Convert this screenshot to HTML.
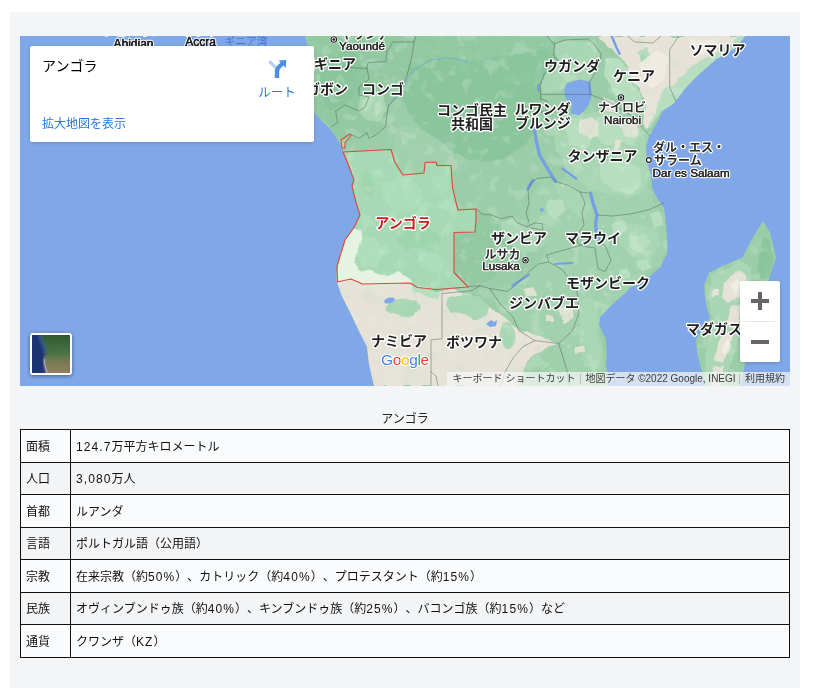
<!DOCTYPE html>
<html lang="ja">
<head>
<meta charset="utf-8">
<title>アンゴラ</title>
<style>
html,body{margin:0;padding:0;background:#fff;}
body{width:813px;height:696px;position:relative;overflow:hidden;font-family:"Liberation Sans","Noto Sans CJK JP",sans-serif;}
#wrap{position:absolute;left:10px;top:12px;width:790px;height:676px;background:#f3f5f7;}
#map{position:absolute;left:20px;top:36px;width:770px;height:350px;overflow:hidden;background:#80a8e8;}
#map svg{position:absolute;left:0;top:0;display:block;}
#card{position:absolute;left:10px;top:10px;width:284px;height:96px;background:#fff;border-radius:2px;box-shadow:0 1px 4px -1px rgba(0,0,0,.3);}
#card .ttl{position:absolute;left:12px;top:11px;font-size:14px;line-height:18px;color:#000;}
#card .lnk{position:absolute;left:12px;top:69.5px;font-size:12px;line-height:16px;color:#2a77e0;}
#card .rt{position:absolute;left:216px;top:38.5px;width:62px;text-align:center;font-size:12.5px;line-height:16px;color:#2a77e0;}
#card svg.ic{position:absolute;left:238px;top:14px;}
#sat{position:absolute;left:10px;top:297px;width:38px;height:38px;border:2px solid #fff;border-radius:3px;box-shadow:0 1px 4px rgba(0,0,0,.45);overflow:hidden;background:#3d6b3a;}
#zoom{position:absolute;left:720px;top:245px;width:40px;height:81px;background:#fff;border-radius:2px;box-shadow:0 1px 4px -1px rgba(0,0,0,.3);}
#zoom i{position:absolute;background:#666;}
#attr{position:absolute;right:0;bottom:0;height:14px;font-size:10px;line-height:14px;color:#3c3c3c;white-space:nowrap;}
#attr span{position:absolute;top:0;height:14px;background:rgba(245,245,245,.72);}
#mapsvg,#card div,#attr,#cap,table{will-change:transform;}
#cap{position:absolute;left:20px;top:410.5px;width:770px;text-align:center;font-size:12px;line-height:17px;color:#222;}
table{position:absolute;left:20px;top:429px;width:770px;border-collapse:collapse;font-size:12px;color:#111;table-layout:fixed;text-spacing-trim:space-all;}
td{border:1px solid #111;padding:0 5px 2px;vertical-align:middle;background:#fafbfc;}
tr:nth-child(even) td{background:#f3f4f6;}
td:first-child{width:39px;}
.n{letter-spacing:1.1px;}
</style>
</head>
<body>
<div id="wrap"></div>
<div id="map">
<svg id="mapsvg" width="770" height="350" viewBox="20 36 770 350">
<defs>
<style>
.c{font-family:"Liberation Sans","Noto Sans CJK JP",sans-serif;font-weight:700;font-size:14px;fill:#1f1f1f;stroke:#fff;stroke-width:2.6px;stroke-linejoin:round;paint-order:stroke fill;text-anchor:middle;}
.t{font-family:"Liberation Sans","Noto Sans CJK JP",sans-serif;font-weight:500;font-size:12px;fill:#2b2b2b;stroke:#fff;stroke-width:2.4px;stroke-linejoin:round;paint-order:stroke fill;text-anchor:middle;}
.tl{font-family:"Liberation Sans",sans-serif;font-weight:400;font-size:11.7px;fill:#2a2a2a;stroke:#fff;stroke-width:2.4px;stroke-linejoin:round;paint-order:stroke fill;text-anchor:middle;}
.b{fill:none;stroke:#4f5a53;stroke-width:.7;stroke-opacity:.65;stroke-linejoin:round;stroke-linecap:round;}
.w{fill:#80a8e8;}
.r{fill:none;stroke:#749fe6;stroke-linecap:round;stroke-linejoin:round;}
.lg{fill:#b7debf;}
.mg{fill:#a9d6b3;}
.dg{fill:#8ac59b;}
.dg2{fill:#92c9a1;}
.bg{fill:#e6e2d7;}
.bg2{fill:#dfe3cf;}
</style>
<clipPath id="land"><use href="#africa"/><use href="#mada"/></clipPath>
<filter id="bl" x="0" y="0" width="100%" height="100%" filterUnits="objectBoundingBox"><feTurbulence type="fractalNoise" baseFrequency="0.06" numOctaves="2" seed="7" result="n"/><feDisplacementMap in="SourceGraphic" in2="n" scale="7" xChannelSelector="R" yChannelSelector="G" result="d"/><feGaussianBlur in="d" stdDeviation="0.5"/></filter>
<filter id="tx" x="0" y="0" width="100%" height="100%"><feTurbulence type="fractalNoise" baseFrequency="0.07" numOctaves="3" seed="11" result="n"/><feColorMatrix in="n" type="matrix" values="0 0 0 0 0.78  0 0 0 0 0.9  0 0 0 0 0.8  9 0 0 0 -5.2"/></filter>
<filter id="tx2" x="0" y="0" width="100%" height="100%"><feTurbulence type="fractalNoise" baseFrequency="0.055" numOctaves="3" seed="23" result="n"/><feColorMatrix in="n" type="matrix" values="0 0 0 0 0.47  0 0 0 0 0.72  0 0 0 0 0.55  0 9 0 0 -5.4"/></filter>
</defs>
<rect x="20" y="36" width="770" height="350" fill="#80a8e8"/>
<!-- mainland -->
<path id="africa" fill="#9bcda8" d="M305 36 L309 48 L312 62 L309 78 L308 92 L314 112 L322 121 L331 130 L338 140 L343 150 L347.5 162.5 L354 180 L352 186 L356 202.5 L360 215 L354 227.5 L345 240 L340 254 L337 266 L336.7 281 L341.6 295.5 L349.5 311 L359 331 L367 346.7 L369 364 L374 386 L608 386 L607.8 372 L605.8 366 L606.8 354.4 L605.8 338.7 L599 325 L600 317 L611.7 305 L625 293 L630 287.5 L642.5 282.5 L660 267.5 L667.5 252.5 L667 238 L666 225 L664 208 L660 203 L652.5 190 L651 175 L646.5 160 L646 146 L649 136.4 L657 122.6 L662.8 110.8 L674.6 103 L684.5 89 L700 73.4 L716 59.6 L735.7 47.8 L745.5 36 Z"/>
<path id="mada" fill="#9bcda8" d="M763 221 L770 232.5 L776 257.5 L770 275 L764 300 L756 330 L745 365 L740 386 L704 386 L702.5 374 L697.5 355 L696 340 L703 328 L710 317.5 L706 305 L704 285 L709 272.5 L722.5 266 L742.5 257.5 L750 242.5 L759 227.5 Z"/>
<g clip-path="url(#land)"><g filter="url(#bl)">
<!-- ===== darker greens ===== -->
<path class="dg2" d="M300 36 L420 36 L412 56 L406 78 L400 93 L389 105 L387 126 L377 134 L360 138 L345 142 L331 130 L314 112 L300 90Z"/>
<path class="dg" d="M416 36 L548 36 L555 44 L554 56 L557 60 L545 73 L540 85 L541 100 L538 120 L534 134 L524 146 L508 156 L490 162 L470 160 L452 152 L438 140 L426 132 L414 120 L404 104 L402 88 L408 72 L412 55Z"/>
<path class="dg2" d="M416 36 L548 36 L552 46 L520 54 L496 57 L468 60 L450 57 L432 58 L414 68 L410 60Z"/>
<path class="dg" d="M320 60 L350 50 L370 70 L360 90 L345 104 L330 110 L318 96Z"/>
<path class="dg2" d="M476 232 L500 236 L514 246 L510 262 L496 276 L478 284 L468 287 L454 272 L454 233Z"/>
<path class="dg2" d="M476 210 L492 216 L500 226 L496 236 L476 232Z"/>
<!-- ===== medium / light greens ===== -->
<path d="M556 182 L600 150 L650 190 L666 225 L667 252 L642 282 L610 304 L600 330 L606 386 L570 386 L560 345 L535 335 L500 312 L490 290 L515 285 L540 262 L548 240 L530 228 L530 200 L540 180Z" fill="#a1d1ad"/>
<path class="mg" d="M361 95 L372 91 L384 96 L386 110 L380 122 L366 120 L358 110Z"/>
<path class="lg" d="M364 100 L370 96 L372 104 L368 112 L363 108Z M374 104 L380 100 L382 110 L376 116Z"/>
<path d="M392 128 L410 124 L430 136 L448 150 L470 162 L452 166 L436 162 L425 163 L424 173 L403 175 L395 162Z" fill="#a1d0ac"/>
<!-- angola interior texture -->
<path d="M382 182 L400 178 L418 184 L424 198 L416 210 L398 212 L384 204Z" fill="#a2d2ae"/>
<path d="M360 236 L376 238 L384 252 L378 266 L362 268 L356 254Z" fill="#a6d5b1"/>
<path d="M400 230 L412 226 L420 232 L430 228 L440 236 L436 248 L426 252 L414 246 L406 250 L398 242Z" fill="#8fc79e"/>
<path d="M360 172 L368 170 L374 182 L372 196 L364 192Z" fill="#91c8a0"/>
<path d="M420 254 L436 254 L446 262 L440 274 L426 272 L418 262Z" fill="#a3d3af"/>
<path d="M432 176 L446 172 L450 186 L444 198 L434 192Z" fill="#a1d1ad"/>
<!-- uganda lighter -->
<path class="mg" d="M556 44 L590 40 L600 54 L596 72 L588 82 L570 82 L562 90 L542 94 L541 84 L546 73 L558 60 L554 55Z"/>
<!-- tanzania -->
<path class="mg" d="M560 116 L590 112 L620 112 L644 128 L646 160 L650 180 L640 196 L610 196 L585 186 L566 172 L556 150 L552 130Z"/>
<path class="lg" d="M596 118 L612 112 L628 118 L640 130 L636 146 L622 142 L606 146 L594 136Z"/>
<path class="lg" d="M566 128 L580 124 L590 140 L584 150 L570 146Z"/>
<path class="lg" d="M600 166 L620 160 L638 166 L644 184 L630 196 L612 192 L602 182Z"/>
<path class="mg" d="M556 182 L570 186 L582 194 L590 206 L584 220 L572 214 L560 200Z"/>
<!-- mozambique lighter -->
<path class="mg" d="M620 226 L640 222 L656 230 L660 248 L648 262 L630 258 L620 244Z"/>
<path class="lg" d="M630 236 L644 232 L650 244 L640 252 L630 248Z"/>
<path class="mg" d="M578 300 L592 296 L600 306 L596 330 L602 350 L596 372 L584 366 L580 340Z"/>
<path class="lg" d="M612 224 L622 220 L628 230 L620 238 L612 234Z M636 262 L648 258 L652 268 L642 274Z M618 270 L628 268 L630 278 L620 282Z M650 214 L660 212 L662 224 L654 228Z"/>
<!-- zambia -->
<path class="mg" d="M500 222 L516 218 L530 228 L544 226 L548 240 L536 252 L518 250 L506 240Z"/>
<path class="lg" d="M548 200 L560 198 L566 210 L556 218 L546 212Z"/>
<path class="lg" d="M606 60 L618 58 L628 70 L632 84 L640 92 L642 108 L634 112 L622 104 L612 92 L604 76Z"/>
<path class="lg" d="M746 36 L736 48 L716 60 L700 74 L684 90 L674 104 L662 111 L650 128 L640 110 L660 84 L690 60 L720 44 L735 36Z"/>
<!-- ===== beige ===== -->
<path class="bg" d="M330 280 L351 277 L362 283 L410 283 L418 287.5 L438 290.6 L455 290 L470 295 L482 301 L490 307 L499 313 L509 321 L517 329 L535 335 L549 339 L557 345 L545 348.5 L535 354 L527 362 L519 386 L370 386 L338 300Z"/>
<path d="M353 228 L362 232 L357 250 L354 262 L360 272 L372 269 L386 276 L398 272 L410 279 L413 283 L362.5 284 L351 279 L337 282 L337 266 L345 240Z" fill="#f2efe6"/>
<path class="bg" d="M598 36 L739.6 36 L727.8 47.8 L708 55.7 L692.4 65.5 L676.6 81.3 L664.8 89 L658.9 101 L655 114.7 L647 128.5 L643 122.6 L645 105 L639 87 L631.3 81.3 L627.4 67.5 L619.5 55.7Z"/>
<path d="M640 60 L660 50 L668 60 L664 80 L652 90 L644 78Z M690 40 L720 38 L712 50 L694 56Z" fill="#efebe2"/>
<path class="bg" d="M580 120 L590 116 L600 122 L598 136 L588 140 L580 132Z M613 140 L619 140 L619 151 L613 150Z M620 126 L636 124 L638 136 L624 138Z M602 98 L614 100 L618 112 L606 112Z" opacity=".9"/>
<path class="bg" d="M525 288 L534 286 L536 294 L527 296Z M558 308 L572 306 L574 318 L562 322Z M546 316 L552 315 L552 321 L546 321Z M576 346 L584 346 L584 352 L577 353Z M553 356 L559 356 L559 362 L553 362Z" opacity=".9"/>
<!-- green in namibia/botswana/s.africa (over beige) -->
<path class="mg" d="M388 305 L396 300 L404 298 L416 300 L420 308 L414 315 L402 316 L392 314 L386 310Z"/>
<path class="lg" d="M413 286 L426 288 L440 292 L438 298 L424 297 L414 293Z"/>
<path class="mg" d="M448 297 L462 294 L478 297 L490 306 L488 316 L474 319 L462 313 L452 314 L446 305Z"/>
<path class="mg" d="M503 322 L512 324 L516 336 L510 350 L503 346 L500 332Z"/>
<path d="M535 354 L545 348.5 L557 345 L566 362 L569 386 L519 386 L527 362Z" fill="#9fd0aa"/>
<path class="mg" d="M636 50 L646 46 L650 54 L642 60 L640 56Z"/>
<!-- madagascar -->
<path class="mg" d="M712 274 L740 262 L752 268 L752 294 L744 318 L736 346 L726 386 L706 386 L704 360 L710 336 L712 318 L708 296Z"/>
<path class="bg" d="M724 282 L736 273 L747 277 L749 290 L744 300 L736 296 L730 304 L722 298Z M731 306 L741 304 L740 320 L734 330 L726 326 L728 314Z M724 332 L734 334 L730 350 L724 362 L716 360 L718 344Z M714 366 L724 366 L720 386 L710 386Z M711 290 L718 288 L718 296 L712 297Z"/>
<path d="M730 284 L738 280 L742 288 L736 292Z M728 338 L732 340 L726 354 L722 352Z" fill="#f1eee6"/>
<path class="dg" d="M762 236 L770 240 L774 258 L768 276 L760 284 L758 266 L760 250Z"/>

</g><rect x="20" y="36" width="770" height="350" filter="url(#tx)" opacity=".2"/><rect x="20" y="36" width="770" height="350" filter="url(#tx2)" opacity=".12"/></g>
<path class="w" d="M564 90 L567 83 L580 79.5 L591 82 L592 94 L589 104 L585 110 L579 115.5 L571 113 L572 105 L566 99Z"/>
<path class="r" d="M534.5 128 L536 140 L538 148 L539.5 155 L546 166 L551.7 175.5 L555.6 181.4" stroke-width="3.2"/>
<path class="r" d="M590.5 193 L593 203 L597 215 L595.5 224.7 L596.5 232.6 L600 244" stroke-width="3.3"/>
<path class="r" d="M562.5 168.6 L576 178.5" stroke-width="2.4"/>
<path class="r" d="M527.5 189 L533 180.5" stroke-width="3.2"/>
<path class="r" d="M512.3 285.5 L521 280 L529 274.7" stroke-width="2.4"/>
<path class="r" d="M554.6 264 L572.4 263" stroke-width="1.8"/>
<path class="r" d="M611.7 36 L616.6 47.8 L619.6 53.7" stroke-width="2.4"/>
<path class="r" d="M538 85 L538.5 91" stroke-width="2.2"/>
<circle cx="541.8" cy="210" r="2" class="w"/>
<ellipse cx="389.5" cy="300.5" rx="5.5" ry="2.8" class="w" transform="rotate(-15 389.5 300.5)"/>
<path class="w" d="M486 324 L491 320 L494 322 L497 320 L496 326 L490 327Z"/>
<path class="r" d="M467.5 61.6 L450 58 L432 59.6 L414 69.5 L406.5 81 L392.7 101 L387.8 107" stroke-width=".9" stroke-opacity=".7"/>

<g class="b">
<path d="M316 65.5 L367 68.5 L369 79 L359 87 L359 95 L369 97 L365 107 L359 111 L345.4 105 L335.6 111 L337.5 122.6 L331.6 126.5"/>
<path d="M367 68.5 L368 62.6 L385.8 61.6 L386.8 51.7 L390.7 45.8 L392.7 42 L414 42 L416 36"/>
<path d="M414 42 L412 55.7 L406.5 77 L400.5 93 L388.7 105 L386.8 114.7 L385.8 126.5 L377 134.4 L369 138.4 L367 132.5 L359 138.4 L351 134.4"/>
<path d="M546.8 36 L554.6 43.9 L553.7 55.7 L557.6 59.6 L544.8 73.4 L539.9 85.2 L540.9 99"/>
<path d="M554.6 43.9 L564.5 40 L588 39 L593 43 L601 53.7 L600 61.6 L596 71.4 L589 83.2 L590 94.5"/>
<path d="M541 94.3 L590 94.5 L607.8 101 L630 114.7 L650 136"/>
<path d="M541 99 L547 101 L548 110 L541 112 L546 116 L549 124 L542 128 L535 129"/>
<path d="M678.6 36 L669.7 49.8 L669.7 87 L675.6 101"/>
<path d="M627.4 36 L635 42 L653 43 L661 36"/>
<path d="M477 209 L481.8 214 L491.6 215 L501.5 218.8 L512 216 L517 222.8 L527 226.7 L535 222.8 L542 223.7 L543 230 L531 228"/>
<path d="M529 221.8 L526 213 L529 203 L528 191 L531 182.4 L537 178.5 L550.7 177 L555.6 181.4 L568.4 185.4 L580 192 L588 193"/>
<path d="M580 192 L585 203 L582 213 L584 224.7 L579 232.6 L577 242.5 L584 246.4 L595 248 L598 268.6 L605 271.6 L611 260 L605 245 L600 244"/>
<path d="M598 215 L611.7 216 L630 214 L648 210 L664 203"/>
<path d="M546.8 255 L584 244.4"/>
<path d="M546.8 255 L548.7 262 L562.5 269.8 L568.4 277.7 L577 291.4 L579 313 L572.4 330.8 L558.6 343.6 L564.5 362 L567.4 372 L569 386"/>
<path d="M468.6 286.7 L480 285.7 L489.7 288.5 L507.4 291.4 L515 285.5 L531 269.8 L539 263.9 L548.7 262"/>
<path d="M489.7 288.5 L499.5 303 L513 317 L519 330.8 L535 340.6 L558.6 343.6"/>
<path d="M535 340.6 L523 346.6 L513 358 L505 372 L500 386"/>
<path d="M442 293.6 L442 338.8 L431 339.8 L431 386"/>
<path d="M442 293.6 L471.6 290.6 L480 285.7"/>
<path d="M431 372 L436 376 L438 386"/>
</g>

<path d="M343 152 L391 149.5 L395 162.5 L403 175 L424 173 L425 162.5 L436 162 L437 165.5 L451 165.5 L452.5 187.5 L456 202.5 L458 210 L476 209 L476 220 L475 232 L454 232.5 L454 272.5 L468 287 L436 289.5 L417.5 287.5 L410 283 L362.5 284 L351 279 L337.5 282 L337 266 L345 240 L354 227.5 L360 215 L356 202.5 L352 186 L354 180 L347.5 162.5Z" fill="#c8ffd7" fill-opacity=".25" stroke="#d9483b" stroke-width="1.1" stroke-linejoin="round"/>
<path d="M341 140 L350 134 L351 135.5 L345 142.5 L345 148 L342 148Z" fill="#c8ffd7" fill-opacity=".25" stroke="#d9483b" stroke-width="1.1" stroke-linejoin="round"/>

<text class="c" x="356" y="69" style="text-anchor:end">赤道ギニア</text>
<text class="c" x="348" y="94" style="text-anchor:end">ガボン</text>
<text class="c" x="383" y="94">コンゴ</text>
<text class="tl" x="362" y="50">Yaoundé</text>
<text class="tl" x="362" y="50" style="stroke:#2a2a2a;stroke-width:.35px;paint-order:normal">Yaoundé</text>
<text class="t" x="365" y="38.6" style="font-weight:700">ヤウンデ</text>
<text class="t" x="133" y="35.2" style="font-weight:700">アビジャン</text>
<text class="t" x="201" y="34.6" style="font-weight:700">アクラ</text>
<text class="c" x="572" y="71">ウガンダ</text>
<text class="c" x="634" y="81">ケニア</text>
<text class="c" x="717.5" y="55">ソマリア</text>
<text class="t" x="622" y="112" style="font-weight:700">ナイロビ</text>
<text class="tl" x="622.5" y="124">Nairobi</text>
<text class="tl" x="622.5" y="124" style="stroke:#2a2a2a;stroke-width:.35px;paint-order:normal">Nairobi</text>
<text class="c" x="472" y="114.5">コンゴ民主</text>
<text class="c" x="472" y="129.3">共和国</text>
<text class="c" x="542.5" y="113.5">ルワンダ</text>
<text class="c" x="543" y="128.3">ブルンジ</text>
<text class="c" x="602.5" y="161">タンザニア</text>
<text class="t" x="653" y="152" style="text-anchor:start;font-weight:700">ダル・エス・</text>
<text class="t" x="654" y="164.5" style="text-anchor:start;font-weight:700">サラーム</text>
<text class="tl" x="652.5" y="177" style="text-anchor:start">Dar es Salaam</text>
<text class="tl" x="652.5" y="177" style="stroke:#2a2a2a;stroke-width:.35px;paint-order:normal;text-anchor:start">Dar es Salaam</text>
<text class="c" x="403" y="228" style="fill:#c5221f">アンゴラ</text>
<text class="c" x="519" y="243">ザンビア</text>
<text class="c" x="593" y="243">マラウイ</text>
<text class="t" x="502.5" y="258.5" style="font-weight:700">ルサカ</text>
<text class="tl" x="501" y="270">Lusaka</text>
<text class="tl" x="501" y="270" style="stroke:#2a2a2a;stroke-width:.35px;paint-order:normal">Lusaka</text>
<text class="c" x="608" y="288">モザンビーク</text>
<text class="c" x="544" y="308">ジンバブエ</text>
<text class="c" x="474" y="347">ボツワナ</text>
<text class="c" x="399" y="346">ナミビア</text>
<text class="c" x="686" y="334" style="text-anchor:start">マダガスカル</text>
<g fill="#fff" stroke="#fff" stroke-width="1.8" stroke-opacity=".9"><circle cx="333.8" cy="39.5" r="2.9"/><circle cx="621" cy="97.5" r="2.9"/><circle cx="525.5" cy="260.3" r="2.9"/><circle cx="648.8" cy="160" r="2.6"/></g>
<g fill="#fff" stroke="#1f1f1f" stroke-width="1.1"><circle cx="333.8" cy="39.5" r="2.75"/><circle cx="621" cy="97.5" r="2.75"/><circle cx="525.5" cy="260.3" r="2.75"/></g>
<circle cx="648.8" cy="160" r="2.4" fill="#fff" stroke="#1f1f1f" stroke-width="1.2"/>
<g fill="#1f1f1f"><circle cx="333.8" cy="39.5" r="1.35"/><circle cx="621" cy="97.5" r="1.35"/><circle cx="525.5" cy="260.3" r="1.35"/></g>
<text class="tl" x="133.5" y="47.5" style="font-size:12px;fill:#1f1f1f">Abidjan</text>
<text class="tl" x="133.5" y="47.5" style="font-size:12px;fill:#1f1f1f;stroke:#1f1f1f;stroke-width:.5px;paint-order:normal">Abidjan</text>
<text class="tl" x="200.5" y="45.5" style="font-size:12px;fill:#1f1f1f">Accra</text>
<text class="tl" x="200.5" y="45.5" style="font-size:12px;fill:#1f1f1f;stroke:#1f1f1f;stroke-width:.5px;paint-order:normal">Accra</text>
<text x="246" y="44.5" style="font-family:'Liberation Sans','Noto Sans CJK JP',sans-serif;font-size:10.7px;fill:#4575cf;text-anchor:middle">ギニア湾</text>
<text x="381" y="364.5" style="font-family:'Liberation Sans',sans-serif;font-size:15.5px;letter-spacing:-.4px;stroke:#fff;stroke-width:2.2px;paint-order:stroke fill;stroke-linejoin:round"><tspan fill="#4285f4">G</tspan><tspan fill="#ea4335">o</tspan><tspan fill="#fbbc05">o</tspan><tspan fill="#4285f4">g</tspan><tspan fill="#34a853">l</tspan><tspan fill="#ea4335">e</tspan></text>


</svg>
<div id="card">
  <div class="ttl">アンゴラ</div>
  <div class="lnk">拡大地図を表示</div>
  <svg class="ic" width="20" height="20" viewBox="0 0 20 20"><path d="M0.2 2.2 L2.6 0.2 L8.6 6.6 L6.4 8.6 Z" fill="#b3cff3"/><path d="M6.8 18 V11 C6.8 7.5 9 6 12.6 2.6 L10.4 0.4 L18.3 0 L17.8 8 L15.6 5.6 C12.6 8.4 11.2 9.2 11.2 12 V18 Z" fill="#4e8fe0"/></svg>
  <div class="rt">ルート</div>
</div>
<div id="sat"><svg width="38" height="38" viewBox="0 0 38 38"><defs><filter id="sb" x="-20%" y="-20%" width="140%" height="140%"><feGaussianBlur stdDeviation="1.6"/></filter><linearGradient id="sg" x1="0" y1="0" x2="0" y2="1"><stop offset="0" stop-color="#2f5a30"/><stop offset=".5" stop-color="#4c7446"/><stop offset=".72" stop-color="#7c7a55"/><stop offset="1" stop-color="#8f7f60"/></linearGradient></defs><rect width="38" height="38" fill="url(#sg)"/><g filter="url(#sb)"><path d="M-4 -4 H7 L10 8 L13 18 L12 26 L15 42 H-4Z" fill="#1c3272"/><path d="M7 -2 L11 10 L14 18" stroke="#3a5a9a" stroke-width="2.5" fill="none"/></g><path d="M12.5 22 L12 28 L14 34 L15 38" stroke="#d8d8d0" stroke-width="1" fill="none" filter="url(#sb)" opacity=".9"/><path d="M12.5 24 L12.3 28 L14 34 L14.8 38" stroke="#e8e6dc" stroke-width=".7" fill="none" opacity=".8"/></svg></div>
<div id="zoom"><i style="left:11px;top:18px;width:18px;height:4px"></i><i style="left:18px;top:11px;width:4px;height:18px"></i><i style="left:5px;top:40px;width:30px;height:1px;background:#e6e6e6"></i><i style="left:11px;top:59px;width:18px;height:4px"></i></div>
<div id="attr"><span style="right:209px;width:134px;text-align:center">キーボード ショートカット</span><span style="right:50px;width:159px;text-align:center">地図データ ©2022 Google, INEGI</span><span style="right:0;width:50px;text-align:center">利用規約</span><i style="position:absolute;right:209px;top:2px;width:1px;height:10px;background:#bbb"></i><i style="position:absolute;right:50px;top:2px;width:1px;height:10px;background:#bbb"></i></div>
</div>
<div id="cap">アンゴラ</div>
<table>
<tr style="height:33px"><td>面積</td><td><span class="n">124.7</span>万平方キロメートル</td></tr>
<tr style="height:32px"><td>人口</td><td><span class="n">3,080</span>万人</td></tr>
<tr style="height:33px"><td>首都</td><td>ルアンダ</td></tr>
<tr style="height:32px"><td>言語</td><td>ポルトガル語（公用語）</td></tr>
<tr style="height:33px"><td>宗教</td><td>在来宗教（約<span class="n">50%</span>）、カトリック（約<span class="n">40%</span>）、プロテスタント（約<span class="n">15%</span>）</td></tr>
<tr style="height:32px"><td>民族</td><td>オヴィンブンドゥ族（約<span class="n">40%</span>）、キンブンドゥ族（約<span class="n">25%</span>）、バコンゴ族（約<span class="n">15%</span>）など</td></tr>
<tr style="height:33px"><td>通貨</td><td>クワンザ（<span class="n">KZ</span>）</td></tr>
</table>
</body>
</html>
